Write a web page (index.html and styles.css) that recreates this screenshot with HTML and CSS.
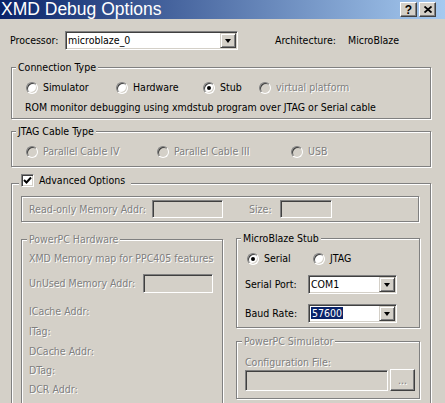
FILE: index.html
```html
<!DOCTYPE html>
<html>
<head>
<meta charset="utf-8">
<link rel="stylesheet" href="styles.css">
</head>
<body>
<div class="titlebar">
  <span class="title">XMD Debug Options</span>
  <div class="tbtns">
    <span class="tbtn">?</span>
    <span class="tbtn"><svg width="8" height="7" viewBox="0 0 8 7"><path d="M0.5 0.5 L7.5 6.5 M7.5 0.5 L0.5 6.5" stroke="#000" stroke-width="1.8" fill="none"/></svg></span>
  </div>
</div>

<div class="procrow">
  <span class="lbl-proc">Processor:</span>
  <div class="combo w-proc"><span class="combo-text">microblaze_0</span><span class="dropbtn"><i class="tri"></i></span></div>
  <span class="lbl-arch">Architecture:</span>
  <span>MicroBlaze</span>
</div>

<div class="group conn">
  <div class="legend">Connection Type</div>
  <div class="radiorow">
    <div class="opt w-sim"><span class="radio"></span><span>Simulator</span></div>
    <div class="opt w-hw"><span class="radio"></span><span>Hardware</span></div>
    <div class="opt w-stub"><span class="radio checked"></span><span>Stub</span></div>
    <div class="opt"><span class="radio disabled"></span><span class="dis">virtual platform</span></div>
  </div>
  <div class="desc">ROM monitor debugging using xmdstub program over JTAG or Serial cable</div>
</div>

<div class="group jtag">
  <div class="legend">JTAG Cable Type</div>
  <div class="radiorow">
    <div class="opt w-pc4"><span class="radio disabled"></span><span class="dis">Parallel Cable IV</span></div>
    <div class="opt w-pc3"><span class="radio disabled"></span><span class="dis">Parallel Cable III</span></div>
    <div class="opt"><span class="radio disabled"></span><span class="dis">USB</span></div>
  </div>
</div>

<div class="group adv">
  <div class="legend adv-legend">
    <span class="check"><svg width="9" height="9" viewBox="0 0 9 9"><path d="M1 4 L3.5 6.5 L8 1.5" stroke="#000" stroke-width="2" fill="none"/></svg></span>
    <span>Advanced Options</span>
  </div>
  <div class="group rombox">
    <span class="dis lbl-rom">Read-only Memory Addr:</span>
    <span class="field w-rom"></span>
    <span class="dis lbl-size">Size:</span>
    <span class="field w-size"></span>
  </div>
  <div class="cols">
    <div class="group ppchw">
      <div class="legend dis lg-ppc">PowerPC Hardware</div>
      <div class="dis item first">XMD Memory map for PPC405 features</div>
      <div class="fieldrow">
        <span class="dis lbl-unused">UnUsed Memory Addr:</span>
        <span class="field w-unused"></span>
      </div>
      <div class="dis item m12">ICache Addr:</div>
      <div class="dis item m7">ITag:</div>
      <div class="dis item m7">DCache Addr:</div>
      <div class="dis item m6">DTag:</div>
      <div class="dis item m6">DCR Addr:</div>
    </div>
    <div class="rightcol">
      <div class="group mbstub">
        <div class="legend lg-mb">MicroBlaze Stub</div>
        <div class="radiorow mbradios">
          <div class="opt w-serial"><span class="radio checked"></span><span>Serial</span></div>
          <div class="opt"><span class="radio"></span><span>JTAG</span></div>
        </div>
        <div class="selrow first-sel">
          <span class="lbl-port">Serial Port:</span>
          <div class="combo w-port"><span class="combo-text">COM1</span><span class="dropbtn"><i class="tri"></i></span></div>
        </div>
        <div class="selrow">
          <span class="lbl-port">Baud Rate:</span>
          <div class="combo w-port"><span class="combo-text"><span class="sel">57600</span></span><span class="dropbtn"><i class="tri"></i></span></div>
        </div>
      </div>
      <div class="group ppcsim">
        <div class="legend dis lg-sim">PowerPC Simulator</div>
        <div class="dis cfglbl">Configuration File:</div>
        <div class="cfgrow">
          <span class="field w-cfg"></span>
          <span class="btn"><span class="dis">...</span></span>
        </div>
      </div>
    </div>
  </div>
</div>
</body>
</html>
```

FILE: styles.css
```css
* { box-sizing: border-box; }
html, body { margin: 0; padding: 0; }
body {
  width: 445px;
  height: 403px;
  overflow: hidden;
  background: #d4d0c8;
  color: #000;
  font-family: "DejaVu Sans Condensed", "DejaVu Sans", sans-serif;
  font-size: 10.5px;
  line-height: 13px;
  white-space: nowrap;
}

/* title bar */
.titlebar {
  height: 19px;
  background: linear-gradient(to right, #0a246a, #a6caf0);
  display: flex;
  align-items: center;
  justify-content: space-between;
}
.title {
  color: #fff;
  font-family: "Liberation Sans", sans-serif;
  font-size: 17.5px;
  line-height: 19px;
  padding-left: 1px;
}
.tbtns { display: flex; gap: 2px; margin-right: 9px; }
.tbtn {
  width: 17px;
  height: 15px;
  background: #d4d0c8;
  border: 1px solid;
  border-color: #fff #404040 #404040 #fff;
  box-shadow: inset -1px -1px #808080;
  display: flex;
  align-items: center;
  justify-content: center;
  font-family: "Liberation Sans", sans-serif;
  font-weight: bold;
  font-size: 12px;
  line-height: 12px;
}

/* processor row */
.procrow {
  display: flex;
  align-items: center;
  height: 19px;
  margin-top: 12px;
  padding-left: 10px;
}
.lbl-proc { width: 55px; }
.lbl-arch { margin-left: 37px; width: 73px; }

/* combo */
.combo {
  display: flex;
  height: 19px;
  padding: 1px;
  background: #fff;
  border: 1px solid;
  border-color: #808080 #fff #fff #808080;
  box-shadow: inset 1px 1px #404040, inset -1px -1px #d4d0c8;
}
.w-proc { width: 173px; }
.w-port { width: 89px; height: 19px; }
.combo-text { flex: 1; padding-left: 1px; line-height: 15px; }
.dropbtn {
  width: 16px;
  background: #d4d0c8;
  border: 1px solid;
  border-color: #d4d0c8 #404040 #404040 #d4d0c8;
  box-shadow: inset 1px 1px #fff, inset -1px -1px #808080;
  display: flex;
  align-items: center;
  justify-content: center;
}
.tri {
  width: 0;
  height: 0;
  border-left: 3.5px solid transparent;
  border-right: 3.5px solid transparent;
  border-top: 4px solid #000;
  margin-top: 1px;
}
.sel { background: #0a246a; color: #fff; padding: 0 1px; }

/* groups */
.group {
  border: 1px solid #808080;
  box-shadow: inset 1px 1px #fff, 1px 1px #fff;
}
.legend {
  width: max-content;
  height: 13px;
  margin: -7px 0 0 4px;
  padding: 0 2px;
  background: #d4d0c8;
}
.conn { margin: 17px 0 0 11px; width: 420px; height: 52px; }
.jtag { margin: 12px 0 0 11px; width: 420px; height: 36px; }

.radiorow {
  display: flex;
  align-items: center;
  height: 13px;
  margin: 7px 0 0 14px;
}
.opt { display: flex; align-items: center; gap: 5px; }
.w-sim { width: 90px; }
.w-hw { width: 87px; }
.w-stub { width: 56px; }
.w-pc4 { width: 131px; }
.w-pc3 { width: 134px; }
.w-serial { width: 66px; }

.radio {
  width: 12px;
  height: 12px;
  border-radius: 50%;
  background: #fff;
  border: 1px solid;
  border-color: #808080 #fff #fff #808080;
  box-shadow: inset 1px 1px #404040, inset -1px -1px #d4d0c8;
  flex: none;
  position: relative;
}
.radio.disabled { background: #d4d0c8; }
.radio.checked::after {
  content: "";
  position: absolute;
  left: 3px;
  top: 3px;
  width: 4px;
  height: 4px;
  border-radius: 50%;
  background: #000;
}
.dis { color: #808080; text-shadow: 1px 1px 0 #fff; }
.desc { margin: 7px 0 0 13px; }

/* advanced */
.adv { margin: 16px 0 0 11px; width: 420px; height: 260px; }
.adv-legend {
  display: flex;
  align-items: center;
  gap: 5px;
  margin: -10px 0 0 7px;
  padding: 0 6px 0 2px;
}
.check {
  width: 13px;
  height: 13px;
  background: #fff;
  border: 1px solid;
  border-color: #808080 #fff #fff #808080;
  box-shadow: inset 1px 1px #404040, inset -1px -1px #d4d0c8;
  display: flex;
  align-items: center;
  justify-content: center;
}

.rombox {
  margin: 9px 0 0 9px;
  width: 398px;
  height: 26px;
  display: flex;
  align-items: center;
  padding-left: 7px;
}
.lbl-rom { width: 123px; }
.lbl-size { margin-left: 26px; width: 31px; }
.field {
  height: 18px;
  background: #d4d0c8;
  border: 1px solid;
  border-color: #808080 #fff #fff #808080;
  box-shadow: inset 1px 1px #404040, inset -1px -1px #d4d0c8;
}
.w-rom { width: 71px; }
.w-size { width: 52px; }

.cols {
  display: flex;
  align-items: flex-start;
  gap: 13px;
  margin: 16px 0 0 9px;
}
.ppchw { width: 202px; height: 200px; margin-top: 1px; padding-left: 7px; }
.lg-ppc { margin-left: -2px; }
.item.first { margin-top: 6px; }
.fieldrow { display: flex; align-items: center; height: 19px; margin-top: 9px; }
.lbl-unused { width: 114px; }
.w-unused { width: 70px; height: 19px; }
.m12 { margin-top: 12px; }
.m7 { margin-top: 7px; }
.m6 { margin-top: 6px; }

.rightcol { width: 184px; }
.mbstub { height: 90px; }
.mbradios { margin: 7px 0 0 10px; }
.selrow {
  display: flex;
  align-items: center;
  height: 19px;
  margin: 10px 0 0 8px;
}
.lbl-port { width: 63px; }

.ppcsim { margin-top: 13px; height: 58px; }
.lg-sim { margin-left: 5px; }
.cfglbl { margin: 8px 0 0 8px; }
.cfgrow { display: flex; align-items: flex-start; gap: 2px; margin-left: 8px; }
.w-cfg { width: 143px; height: 21px; margin-top: 1px; }
.btn {
  width: 25px;
  height: 22px;
  background: #d4d0c8;
  border: 1px solid;
  border-color: #fff #404040 #404040 #fff;
  box-shadow: inset -1px -1px #808080;
  display: flex;
  align-items: center;
  justify-content: center;
}
```
